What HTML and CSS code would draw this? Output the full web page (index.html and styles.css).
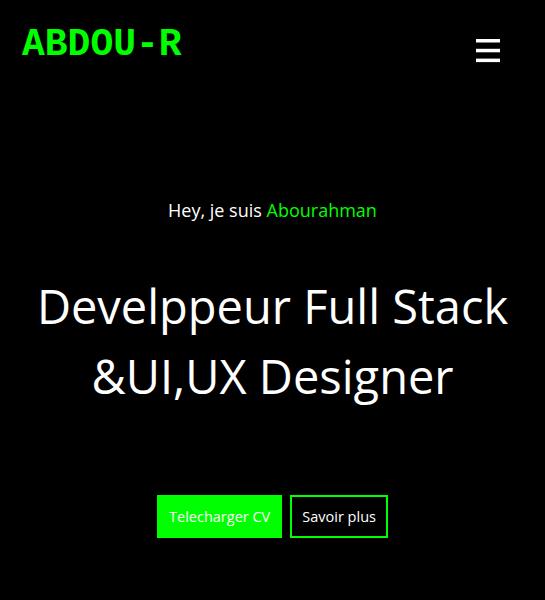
FILE: index.html
```html
<!DOCTYPE html>
<html lang="fr">
<head>
<meta charset="utf-8">
<title>ABDOU-R</title>
<link rel="stylesheet" href="styles.css">
</head>
<body>
<header class="nav">
  <div class="logo">ABDOU-R</div>
  <div class="burger" aria-label="menu">
    <svg width="24" height="24" viewBox="0 0 24 24"><rect x="0" y="0" width="24" height="3.5" fill="#fff"/><rect x="0" y="9.8" width="24" height="3.5" fill="#fff"/><rect x="0" y="19.6" width="24" height="3.5" fill="#fff"/></svg>
  </div>
</header>
<main class="hero">
  <p class="intro">Hey, je suis <span class="name">Abourahman</span></p>
  <h1 class="title">Develppeur Full Stack<br>&amp;UI,UX Designer</h1>
  <div class="actions">
    <a class="btn btn-fill">Telecharger CV</a>
    <a class="btn btn-outline">Savoir plus</a>
  </div>
</main>
</body>
</html>
```
FILE: styles.css
```css
* { box-sizing: border-box; }
html, body { margin: 0; padding: 0; background: #000; }
body {
  font-family: "Open Sans", "Noto Sans", sans-serif;
  color: #fff;
  width: 545px;
  height: 600px;
  overflow: hidden;
}
.nav {
  display: flex;
  justify-content: space-between;
  align-items: flex-start;
  padding: 22px 45px 0 22px;
  height: 80px;
}
.logo {
  font-family: "Nimbus Mono PS", "Courier New", "Liberation Mono", monospace;
  font-weight: bold;
  font-size: 38px;
  color: #00ff00;
  line-height: 46px;
}
.burger {
  margin-top: 17px;
  line-height: 0;
}
.hero {
  display: flex;
  flex-direction: column;
  align-items: center;
  text-align: center;
  padding-top: 118px;
}
.intro {
  margin: 0;
  font-size: 18px;
  line-height: 24px;
}
.name { color: #00ff00; }
.title {
  margin: 49px 0 0 0;
  font-weight: normal;
  font-size: 47px;
  line-height: 70px;
}
.actions {
  display: flex;
  gap: 8px;
  margin-top: 84px;
}
.btn {
  display: block;
  font-size: 14.5px;
  line-height: 19px;
  padding: 10px 10px;
  color: #fff;
  text-decoration: none;
}
.btn-fill {
  background: #00ff00;
  border: 2px solid #00ff00;
}
.btn-outline {
  border: 2px solid #00ff00;
}
```
